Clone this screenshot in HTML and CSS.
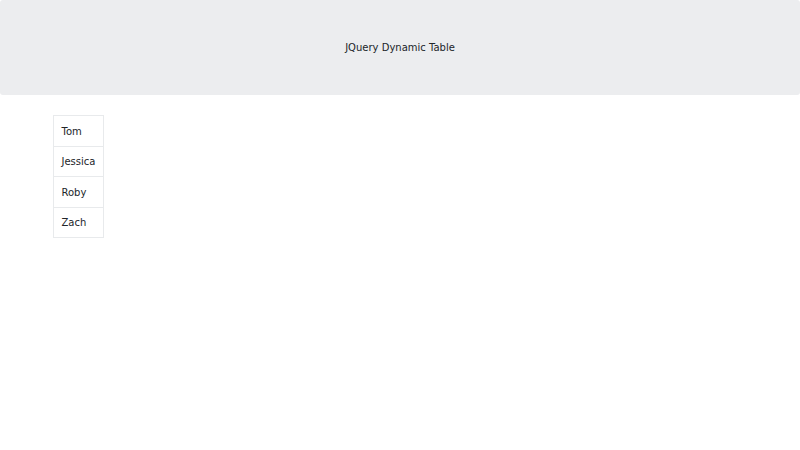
FILE: index.html
```
<!DOCTYPE html>
<html>
<head>
<meta charset="utf-8">
<link rel="stylesheet" href="styles.css">
</head>
<body>
<header class="hero">
  <h1 class="hero-title">JQuery Dynamic Table</h1>
</header>
<main class="container">
  <table class="names">
    <tbody>
      <tr><td>Tom</td></tr>
      <tr><td>Jessica</td></tr>
      <tr><td>Roby</td></tr>
      <tr><td>Zach</td></tr>
    </tbody>
  </table>
</main>
</body>
</html>
```
FILE: styles.css
```
html, body {
  margin: 0;
  padding: 0;
  background: #fff;
}
body {
  font-family: "DejaVu Sans", sans-serif;
  font-size: 10px;
  line-height: 15px;
  color: #212529;
}
.hero {
  background: #ecedef;
  border-radius: 3px;
  padding: 40px 20px;
  margin-bottom: 20px;
  text-align: center;
}
.hero-title {
  margin: 0;
  font-size: 10px;
  font-weight: normal;
  line-height: 15px;
}
.container {
  padding-left: 53px;
}
.names {
  border-collapse: collapse;
}
.names td {
  border: 1px solid #e8eaec;
  padding: 7.5px 7.5px 7px;
  line-height: 15px;
}
```
